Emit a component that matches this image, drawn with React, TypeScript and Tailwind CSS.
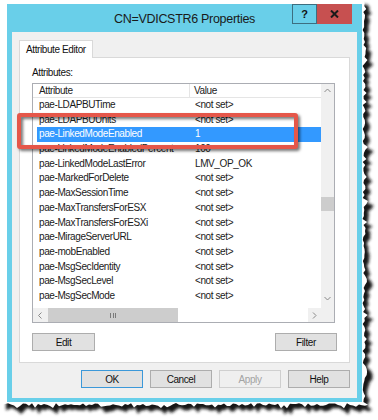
import React from "react";

const rows: [string, string][] = [
  ["pae-LDAPBUTime", "<not set>"],
  ["pae-LDAPBUUnits", "<not set>"],
  ["pae-LinkedModeEnabled", "1"],
  ["pae-LinkedModeEnabledPercent", "100"],
  ["pae-LinkedModeLastError", "LMV_OP_OK"],
  ["pae-MarkedForDelete", "<not set>"],
  ["pae-MaxSessionTime", "<not set>"],
  ["pae-MaxTransfersForESX", "<not set>"],
  ["pae-MaxTransfersForESXi", "<not set>"],
  ["pae-MirageServerURL", "<not set>"],
  ["pae-mobEnabled", "<not set>"],
  ["pae-MsgSecIdentity", "<not set>"],
  ["pae-MsgSecLevel", "<not set>"],
  ["pae-MsgSecMode", "<not set>"],
];

const rnd = (i: number) => {
  const x = Math.sin(i * 12.9898 + 78.233) * 43758.5453;
  return x - Math.floor(x);
};

function tornPath(dx: number, dy: number, amp: number) {
  const pts: string[] = [`${dx},${dy}`];
  let i = 0;
  for (let y = 0; y <= 404; y += 3, i++) {
    const x = 362.5 + rnd(i) * amp + (rnd(i * 7 + 3) > 0.82 ? amp * 0.8 : 0);
    pts.push(`${(x + dx).toFixed(1)},${(y + dy).toFixed(1)}`);
  }
  i = 300;
  for (let x = 368; x >= 0; x -= 3, i++) {
    const y = 403 + rnd(i) * amp + (rnd(i * 5 + 1) > 0.82 ? amp * 0.8 : 0);
    pts.push(`${(x + dx).toFixed(1)},${(y + dy).toFixed(1)}`);
  }
  return "M" + pts.join(" L") + " Z";
}

function Chevron({ dir }: { dir: "up" | "down" | "left" | "right" }) {
  const d =
    dir === "up"
      ? "M1.5 5 L4.5 2 L7.5 5"
      : dir === "down"
      ? "M1.5 3 L4.5 6 L7.5 3"
      : dir === "left"
      ? "M5.5 1.5 L2.5 4.5 L5.5 7.5"
      : "M3 1.5 L6 4.5 L3 7.5";
  return (
    <svg width="9" height="9" viewBox="0 0 9 9">
      <path d={d} fill="none" stroke="#8a8a8a" strokeWidth="1" />
    </svg>
  );
}

function Btn({
  children,
  variant = "normal",
  w = "w-[62px]",
}: {
  children: React.ReactNode;
  variant?: "normal" | "default" | "disabled";
  w?: string;
}) {
  const cls =
    variant === "default"
      ? "border-[#3b98d9] bg-[#e1e1e1] text-[#111]"
      : variant === "disabled"
      ? "border-[#cfcfcf] bg-[#efefef] text-[#a3a3a3]"
      : "border-[#adadad] bg-[#e1e1e1] text-[#111]";
  return (
    <div
      className={`${w} h-[18px] border ${cls} flex items-center justify-center text-[10px] tracking-[-0.4px]`}
    >
      {children}
    </div>
  );
}

export default function App() {
  return (
    <div
      className="relative w-[378px] h-[420px] bg-white overflow-hidden"
      style={{ fontFamily: '"Liberation Sans", Arial, sans-serif' }}
    >
      <svg
        className="absolute left-0 top-0"
        width="378"
        height="420"
        viewBox="0 0 378 420"
      >
        <defs>
          <filter id="blur" x="-10%" y="-10%" width="120%" height="120%">
            <feGaussianBlur stdDeviation="1.6" />
          </filter>
        </defs>
        <path d={tornPath(4, 4.5, 4)} fill="#151515" filter="url(#blur)" />
        <path d={tornPath(0, 0, 3)} fill="#ffffff" />
      </svg>

      {/* Window */}
      <div className="relative ml-[7px] mt-[4px] w-[355px] h-[398px] bg-[#69cfe9] flex flex-col">
        {/* Title bar */}
        <div className="h-[28px] grid grid-cols-[1fr_auto_1fr] shrink-0">
          <div />
          <div className="text-[12.5px] tracking-[-0.3px] text-[#1a1a1a] leading-[28px] pt-px">
            CN=VDICSTR6 Properties
          </div>
          <div className="flex justify-end items-start pr-[10px]">
            <div className="w-[25px] h-[20px] border border-[#3d6e80] flex items-center justify-center text-[11px] font-bold text-[#111]">
              ?
            </div>
            <div className="w-[35px] h-[20px] bg-[#c75050] flex items-center justify-center">
              <svg width="9" height="8" viewBox="0 0 9 8">
                <path d="M1 0.5 L8 7.5 M8 0.5 L1 7.5" stroke="#1a1a1a" strokeWidth="2" />
              </svg>
            </div>
          </div>
        </div>

        {/* Body */}
        <div className="mx-[5px] mb-[4px] flex-1 bg-[#f0f0f0] flex flex-col px-[7px] pt-[8px]">
          {/* Tab strip */}
          <div className="flex">
            <div className="relative z-10 h-[18px] bg-white border border-b-0 border-[#d9d9d9] px-[6px] text-[10px] tracking-[-0.4px] leading-[17px] text-[#111]">
              Attribute Editor
            </div>
          </div>
          {/* Panel */}
          <div className="-mt-px h-[306px] border border-[#d9d9d9] bg-white flex flex-col pl-[12px] pr-[13px]">
            <div className="pt-[9px] text-[10px] tracking-[-0.4px] leading-[11px] text-[#111]">
              Attributes:
            </div>
            {/* List */}
            <div className="mt-[5px] h-[240px] w-[303px] border border-[#abadb3] flex flex-col text-[10px] tracking-[-0.4px] text-[#1a1a1a]">
              <div className="flex flex-1 min-h-0">
                <div className="flex-1 min-w-0 flex flex-col overflow-hidden">
                  <div className="h-[14px] flex border-b border-[#e5e5e5] leading-[14px] text-[#222]">
                    <div className="w-[157px] pl-[6px] border-r border-[#e5e5e5]">Attribute</div>
                    <div className="pl-[4px]">Value</div>
                  </div>
                  {rows.map(([a, v], i) => {
                    const sel = i === 2;
                    return (
                      <div
                        key={a}
                        className={`ml-[4px] h-[14.7px] leading-[14.7px] flex shrink-0 ${
                          sel ? "bg-[#3399ff] text-white" : ""
                        }`}
                      >
                        <div className="w-[153px] pl-[2px] whitespace-nowrap overflow-hidden text-ellipsis">
                          {a}
                        </div>
                        <div className="pl-[5px] whitespace-nowrap">{v}</div>
                      </div>
                    );
                  })}
                </div>
                {/* Vertical scrollbar */}
                <div className="w-[13px] bg-[#f0f0f0] flex flex-col shrink-0">
                  <div className="h-[14px] flex items-center justify-center">
                    <Chevron dir="up" />
                  </div>
                  <div className="h-[99px]" />
                  <div className="h-[14px] bg-[#cdcdcd]" />
                  <div className="flex-1" />
                  <div className="h-[14px] flex items-center justify-center mb-[3px]">
                    <Chevron dir="down" />
                  </div>
                </div>
              </div>
              {/* Horizontal scrollbar */}
              <div className="h-[14px] flex shrink-0">
                <div className="flex-1 flex bg-[#f0f0f0]">
                  <div className="w-[15px] flex items-center justify-center">
                    <Chevron dir="left" />
                  </div>
                  <div className="w-[130px] bg-[#cdcdcd] flex items-center justify-center gap-[1.5px]">
                    <div className="w-px h-[5px] bg-[#7a7a7a]" />
                    <div className="w-px h-[5px] bg-[#7a7a7a]" />
                    <div className="w-px h-[5px] bg-[#7a7a7a]" />
                  </div>
                  <div className="flex-1 bg-white" />
                  <div className="w-[13px] flex items-center justify-center">
                    <Chevron dir="right" />
                  </div>
                </div>
                <div className="w-[13px] bg-[#f0f0f0]" />
              </div>
            </div>
            {/* Edit / Filter */}
            <div className="mt-[10px] w-[305px] flex justify-between">
              <Btn w="w-[63px]">Edit</Btn>
              <Btn w="w-[62px]">Filter</Btn>
            </div>
          </div>
          {/* Dialog buttons */}
          <div className="mt-[7px] flex justify-end gap-[7px]">
            <Btn variant="default">OK</Btn>
            <Btn>Cancel</Btn>
            <Btn variant="disabled">Apply</Btn>
            <Btn>Help</Btn>
          </div>
        </div>
      </div>

      {/* Red annotation rectangle */}
      <div className="absolute left-[17px] top-[113px] w-[281px] h-[36px] border-[4px] border-[#e5574a] rounded-[3px] drop-shadow-[2px_2px_1.5px_rgba(0,0,0,0.55)]" />
    </div>
  );
}
